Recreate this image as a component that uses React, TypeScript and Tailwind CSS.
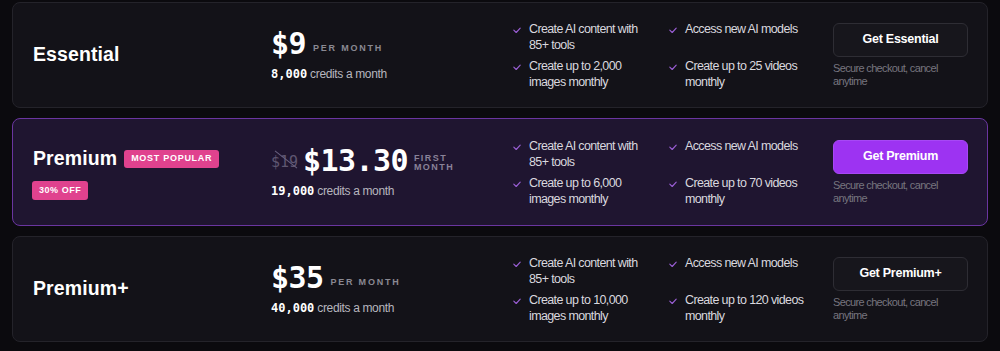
import React from "react";

const sans = { fontFamily: '"Liberation Sans", Arial, sans-serif' };
const mono = { fontFamily: '"DejaVu Sans Mono", "Liberation Mono", monospace' };

const CheckMark = () => (
  <svg viewBox="0 0 10 8" className="w-[8px] h-[7px] mt-[6px] shrink-0" fill="none">
    <path d="M1 3.5 L4 6.5 L9 1" stroke="#9b5fd6" strokeWidth="1.4" strokeLinecap="round" strokeLinejoin="round" />
  </svg>
);

const Feature = ({ text }) => (
  <div className="flex gap-[8px]">
    <CheckMark />
    <span className="text-[12.5px] leading-[16px] tracking-[-0.05em] text-[#d9d8df]">{text}</span>
  </div>
);

const Plan = ({ name, price, credits, images, videos, cta, popular = false, old = null }) => {
  return (
    <div
      className={
        "flex items-center px-5 rounded-lg border " +
        (popular ? "h-[108px] bg-[#1f1530] border-[#6a35a0]" : "h-[106px] bg-[#131218] border-[#24232a]")
      }
    >
      <div className="w-[240px] shrink-0">
        <div className="flex items-center gap-[7px]">
          <span className="text-[19.5px] font-bold text-white tracking-[0.005em]">{name}</span>
          {popular && (
            <span className="bg-[#e0428e] text-white text-[9px] font-bold tracking-[0.08em] px-[7px] h-[18px] flex items-center rounded-[3px]">
              MOST POPULAR
            </span>
          )}
        </div>
        {popular && (
          <span className="mt-[8px] -ml-px inline-flex bg-[#e0428e] text-white text-[9px] font-bold tracking-[0.06em] px-[7px] h-[19px] items-center rounded-[3px]">
            30% OFF
          </span>
        )}
      </div>

      <div className="w-[240px] shrink-0 -ml-[2px]">
        <div className="flex items-end">
          {old && (
            <span className="relative text-[15px] text-[#5e5670] mr-[5px] mb-[5px]" style={mono}>
              {old}
              <span className="absolute left-[1px] top-[8px] w-[28px] h-px bg-[#6a6280] rotate-[38deg]" />
            </span>
          )}
          <span className="text-[30px] leading-[34px] font-bold text-white tracking-[-0.02em]" style={mono}>
            {price}
          </span>
          {popular ? (
            <span className="ml-[6px] mb-[6px] text-[9px] leading-[9px] font-bold tracking-[0.16em] text-[#8a8298]">
              FIRST
              <br />
              MONTH
            </span>
          ) : (
            <span className="ml-[7px] mb-[6px] text-[9px] font-bold tracking-[0.2em] text-[#8a8992]">PER MONTH</span>
          )}
        </div>
        <div className="mt-[4px] text-[12px] text-[#b7b6bf] tracking-[-0.03em]">
          <span className="font-bold text-white tracking-normal" style={mono}>
            {credits}
          </span>{" "}
          credits a month
        </div>
      </div>

      <div className="grid grid-cols-[156px_144px] gap-y-[5px] w-[300px] shrink-0 ml-[2px]">
        <Feature text={<>Create AI content with<br />85+ tools</>} />
        <Feature text="Access new AI models" />
        <Feature text={<>Create up to {images}<br />images monthly</>} />
        <Feature text={<>Create up to {videos} videos<br />monthly</>} />
      </div>

      <div className="ml-5 w-[135px] shrink-0">
        <button
          className={
            "w-full h-[34px] rounded-md text-[12.5px] font-bold text-white tracking-[-0.02em] border " +
            (popular ? "bg-[#9d33f2] border-[#a748f5]" : "bg-[#17161c] border-[#2e2d34]")
          }
        >
          {cta}
        </button>
        <p className="mt-[5px] text-[11px] leading-[13px] tracking-[-0.06em] text-[#77757f]">
          Secure checkout, cancel
          <br />
          anytime
        </p>
      </div>
    </div>
  );
}

export default function App() {
  return (
    <div className="w-[1000px] h-[351px] bg-[#0b0a0e] px-3 pt-[2px] flex flex-col gap-[10px]" style={sans}>
      <Plan name="Essential" price="$9" credits="8,000" images="2,000" videos="25" cta="Get Essential" />
      <Plan
        name="Premium"
        price="$13.30"
        old="$19"
        credits="19,000"
        images="6,000"
        videos="70"
        cta="Get Premium"
        popular
      />
      <Plan name="Premium+" price="$35" credits="40,000" images="10,000" videos="120" cta="Get Premium+" />
    </div>
  );
}
